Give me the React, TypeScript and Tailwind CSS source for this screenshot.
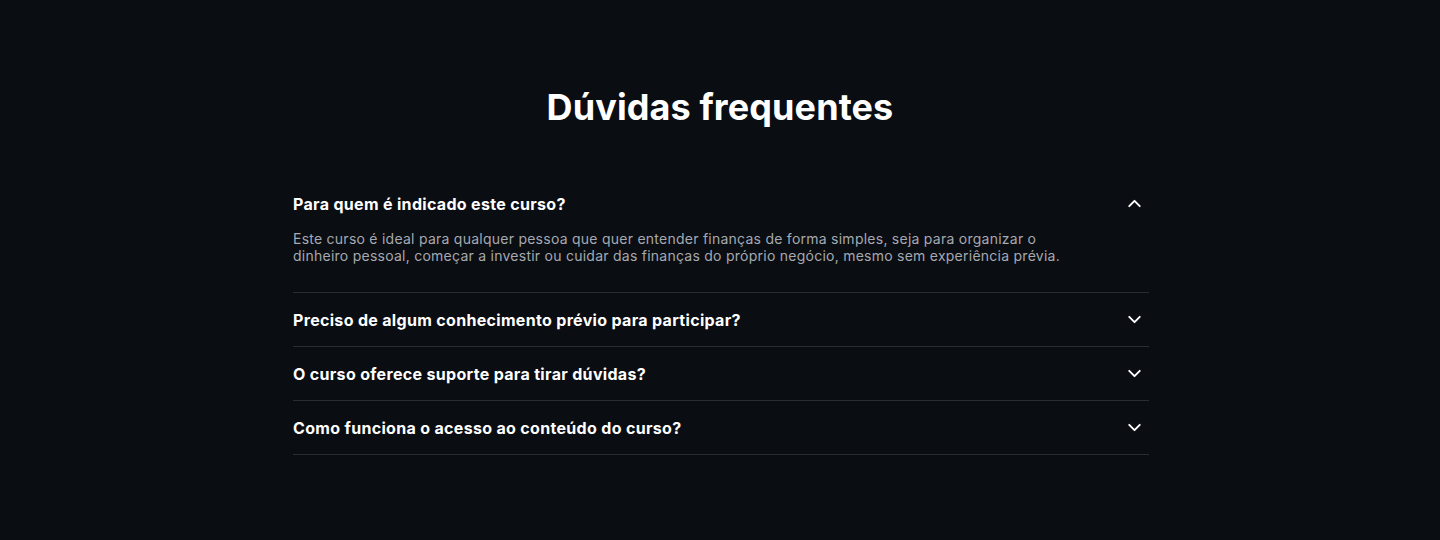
import React, { useState } from "react";

const faqs = [
  {
    q: "Para quem é indicado este curso?",
    a: "Este curso é ideal para qualquer pessoa que quer entender finanças de forma simples, seja para organizar o dinheiro pessoal, começar a investir ou cuidar das finanças do próprio negócio, mesmo sem experiência prévia.",
  },
  {
    q: "Preciso de algum conhecimento prévio para participar?",
    a: "Não. O conteúdo foi pensado para iniciantes e explica cada conceito desde o básico.",
  },
  {
    q: "O curso oferece suporte para tirar dúvidas?",
    a: "Sim. Você pode enviar suas dúvidas e receber respostas da nossa equipe.",
  },
  {
    q: "Como funciona o acesso ao conteúdo do curso?",
    a: "Após a inscrição, você recebe acesso imediato a todas as aulas pela plataforma.",
  },
];

function Chevron({ up }: { up: boolean }) {
  return (
    <svg
      width="21"
      height="21"
      viewBox="0 0 24 24"
      fill="none"
      stroke="currentColor"
      strokeWidth="2.2"
      strokeLinecap="round"
      strokeLinejoin="round"
      className="shrink-0 text-white"
    >
      {up ? <path d="m18 15-6-6-6 6" /> : <path d="m6 9 6 6 6-6" />}
    </svg>
  );
}

export default function App() {
  const [open, setOpen] = useState<number>(0);
  return (
    <div
      className="min-h-[540px] w-full bg-[#0a0d12] pt-[87px] pb-20"
      style={{ fontFamily: "Inter, 'Noto Sans', sans-serif" }}
    >
      <h2 className="text-center text-[36px] font-bold leading-[40px] tracking-[0.1px] text-white">
        Dúvidas frequentes
      </h2>
      <div className="ml-[calc(50%-427px)] mt-[50px] w-[856px]">
        {faqs.map((f, i) => {
          const isOpen = open === i;
          return (
            <div
              key={i}
              className={i === 0 ? "" : "border-t border-[#2a2d33]"}
            >
              <button
                onClick={() => setOpen(isOpen ? -1 : i)}
                className="flex h-[53px] w-full items-center justify-between pr-[4px] text-left"
              >
                <span className="text-[16px] font-bold tracking-[0.32px] text-white">
                  {f.q}
                </span>
                <Chevron up={isOpen} />
              </button>
              {isOpen && (
                <p className="max-w-[780px] pb-[28px] text-[14px] leading-[17px] tracking-[0.25px] text-[#a6a9b0]">
                  {f.a}
                </p>
              )}
            </div>
          );
        })}
        <div className="border-t border-[#2a2d33]" />
      </div>
    </div>
  );
}
